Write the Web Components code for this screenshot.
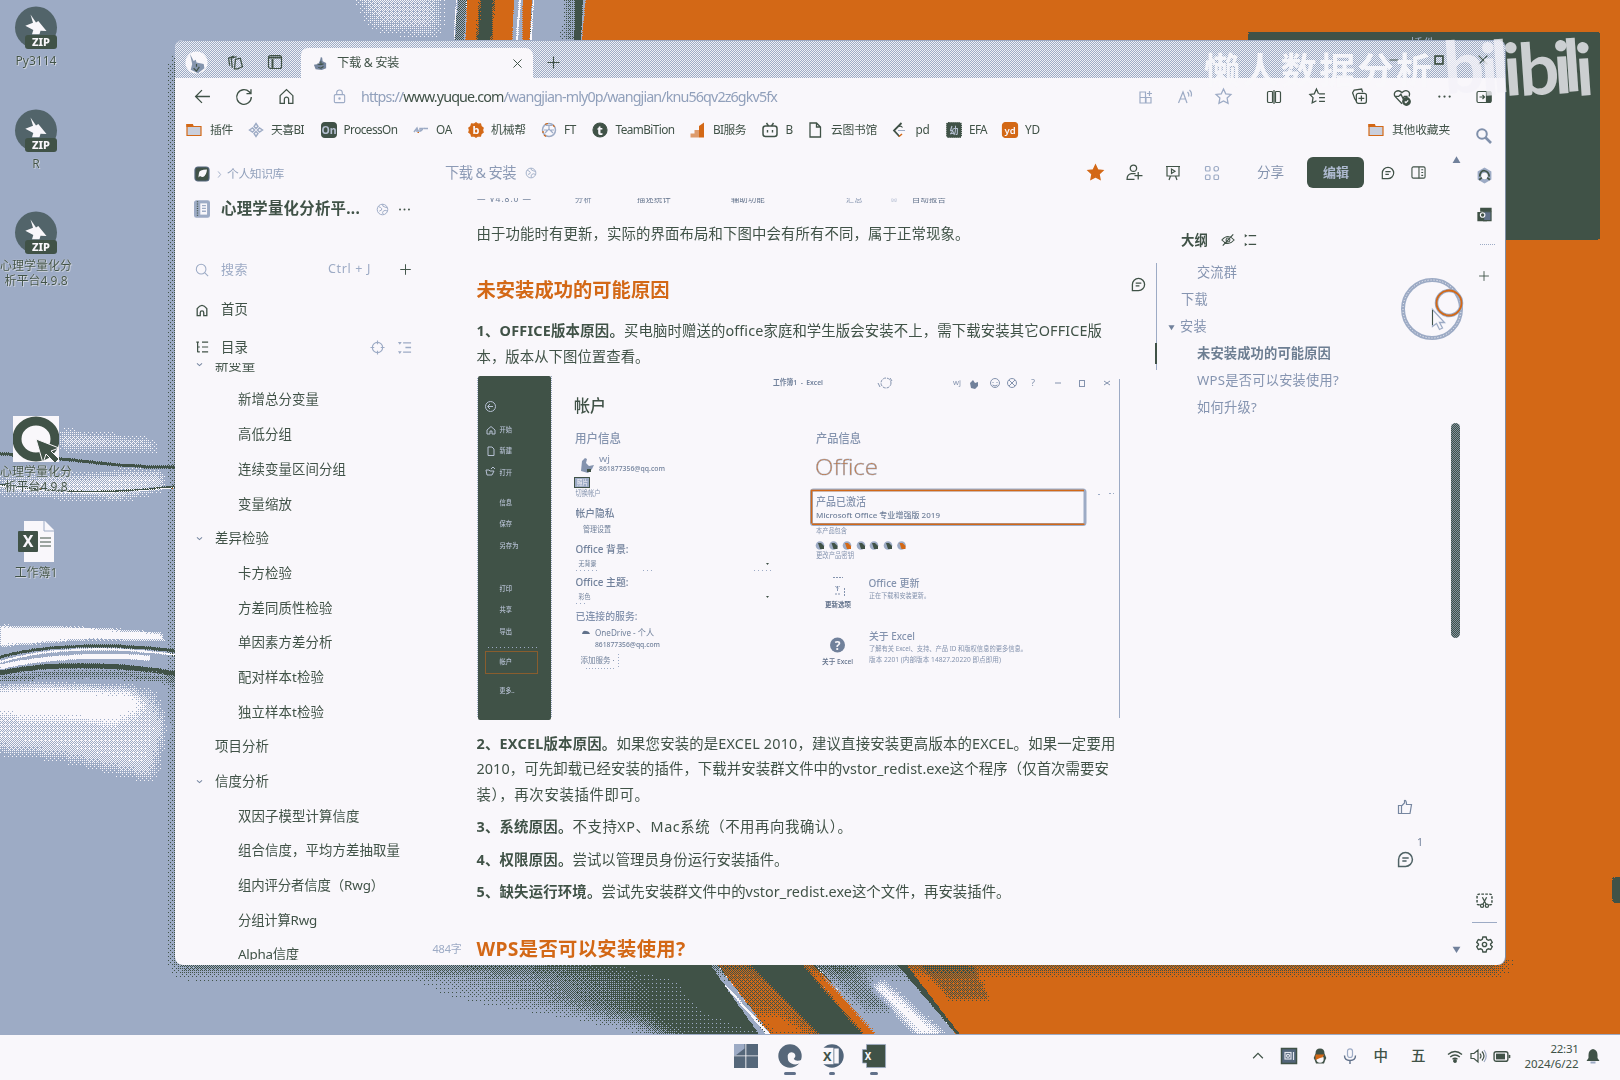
<!DOCTYPE html>
<html lang="zh-CN">
<head>
<meta charset="utf-8">
<title>下载 &amp; 安装</title>
<style>
html,body{margin:0;width:1620px;height:1080px;overflow:hidden;background:#9dabc5}
body{font-family:"Noto Sans","Noto Sans CJK SC",sans-serif;color:#405247;
--ink:#405247;--mist:#9dabc5;--paper:#f9f7fb;--flame:#d36816}
</style>
</head>
<body>
<desk-top></desk-top>
<script>
const INK='#405247',MIST='#9dabc5',PAPER='#f9f7fb',FLAME='#d36816';

const ICONS={
 back:'<path d="M15 8H1.5M7.500 2L1.500 8l6 6"/>',
 reload:'<path d="M14.500 8A6.500 6.500 0 1 1 12.600 3.400L14 4.800M14.200 1v4h-4"/>',
 home:'<path d="M2 7.200L8 1.500l6 5.700V14.500h-4V10.500a2 2 0 0 0-4 0v4H2z"/>',
 lock:'<rect x="2.500" y="6" width="11" height="8.500" rx="1.200"/><path d="M5 6V4a3 3 0 0 1 6 0v2"/><circle cx="8" cy="10.200" r=".7" fill="currentColor"/>',
 spaces:'<path d="M8 5l4.500-1 2 8-4.500 2H7z"/><path d="M5 13l-1-9 5-1.500M2.500 11L1.500 4l5-2"/>',
 tabs:'<rect x="1.500" y="1.500" width="13" height="13" rx="2"/><path d="M1.500 3.500h13M5.500 5v9" stroke-width="2"/>',
 x:'<path d="M3 3l10 10M13 3L3 13"/>',plus:'<path d="M8 1.500v13M1.500 8h13"/>',minus:'<path d="M3 8h10"/>',
 square:'<rect x="3.500" y="3.500" width="9" height="9" stroke-width="2"/>',
 apps:'<path d="M2 3h5.500v11H2zM7.500 8.500H13V14H2M2 8.500h6M8 8.500V14M11.500 2v5M9 4.500h5"/>',
 aloud:'<path d="M1.500 14L6 3l4 11M3.500 10h5M10.500 3q2 2 1 4.500M12.500 1q3 3 1.500 6.500"/>',
 star:'<path d="M8 1l2.100 4.500 4.900.6-3.600 3.400.9 5L8 12.100 3.700 14.500l.9-5L1 6.100l4.900-.6z"/>',
 starf:'<path fill="currentColor" d="M8 1l2.100 4.500 4.900.6-3.600 3.400.9 5L8 12.100 3.700 14.500l.9-5L1 6.100l4.900-.6z"/>',
 split:'<path d="M6.500 2.500H2.800a1.300 1.300 0 0 0-1.300 1.300v8.400a1.300 1.300 0 0 0 1.300 1.300h3.700M9.500 2.500h3.700a1.300 1.300 0 0 1 1.300 1.300v8.400a1.300 1.300 0 0 1-1.300 1.300H9.500M8 1v14M6.500 2.500v11M9.500 2.500v11"/>',
 favs:'<path d="M9 5.500L7 1 5 5.500.8 6.100l3 3L3 14l4-2M9.500 5.500H15M9.500 9H15M9.500 12.500H15"/>',
 collect:'<path d="M5 12L3.500 10 1.500 4.500 3 2l7-1 1 3"/><rect x="5" y="5" width="9.500" height="9.500" rx="2"/><path d="M9.800 7v5.500M7 9.800h5.500"/>',
 heart:'<path d="M8 14L1.800 7.500C-.5 4 4 .5 8 4c4-3.500 8-.5 6.200 3.500M2 7.500h3l2-2 2 4 1-2h3"/><circle cx="12" cy="12" r="3.300" fill="currentColor"/><path stroke="#f9f7fb" d="M10.500 12l1 1 2-2"/>',
 dots:'<g fill="currentColor" stroke="none"><circle cx="2.500" cy="8" r="1.200"/><circle cx="8" cy="8" r="1.200"/><circle cx="13.500" cy="8" r="1.200"/></g>',
 rail:'<rect x="1" y="2.500" width="14" height="11" rx="1.500"/><path fill="currentColor" d="M10.500 2.500h3A1.500 1.500 0 0 1 15 4v8a1.500 1.500 0 0 1-1.500 1.500h-3z"/><path d="M3.500 8h5M6.500 6l2 2-2 2"/>',
 folder:'<path stroke="#d36816" fill="#c9cfdd" d="M1 13V2.500h5l1.500 2H15V13.500H1z"/><path stroke="#d36816" fill="#d36816" d="M1 2.500h5.500v2H1z"/>',
 diam:'<path d="M8 1.500L10 4.500 8 6.500 6 4.500zM8 9.500l2 2-2 3-2-3zM1.500 8l3-2 2 2-2 2zM9.500 8l2-2 3 2-3 2z" stroke-width="1.400"/>',
 badgeOn:'<rect x=".6" y=".6" width="14.800" height="14.800" rx="3.500" fill="#405247" stroke="#405247"/><text x="8" y="12" font-size="10.500" font-weight="700" fill="#b5bfd1" stroke="none" text-anchor="middle">On</text>',
 arp:'<path d="M1 10L4 6l1.500 4M3 9h3M7 10V6.500h3L8 9" stroke-width="1.500"/><path d="M4.500 10.500h1.500" stroke="#d36816"/><path d="M11 6.500h4" stroke-width="1.500"/>',
 gear2:'<path fill="#d36816" stroke="#d36816" d="M8 .8l2 1.400 2.500-.2.700 2.400 2 1.500L14.500 8l.7 2.200-2 1.500-.7 2.300-2.500-.2-2 1.400-2-1.400-2.500.2-.7-2.300-2-1.500L1.500 8 .8 5.900l2-1.500L3.500 2l2.500.2z"/><text x="8" y="12" font-size="11" font-weight="700" fill="#f9f7fb" stroke="none" text-anchor="middle">b</text>',
 wheel:'<circle cx="8" cy="8" r="6.500" stroke-width="1.500"/><path d="M8 3v4l-4 4M8 7l4 4M5 3.500l6 0M3 8h3M10 8h3"/><path stroke="#d36816" d="M4 2.500a6.500 6.500 0 0 1 3-1M12 3l1.500 2M3 13l2 1.500M2 9v2"/>',
 tcirc:'<circle cx="8" cy="8" r="7" fill="#405247"/><text x="8" y="12.500" font-size="13" font-weight="800" fill="#f9f7fb" stroke="none" text-anchor="middle">t</text>',
 bars:'<path fill="#d36816" stroke="none" d="M10 4l5-3.500V15.500h-5z"/><path fill="#dd9b6c" stroke="none" d="M5.500 8H10v7.500H5.500zM1.500 11.500h4v4h-4z"/>',
 tv:'<rect x="1" y="4" width="14" height="10.500" rx="2.500" stroke-width="1.500"/><path d="M4.500 1l2 3M11.500 1l-2 3M5.500 8v2.500M10.500 8v2.500" stroke-width="1.400"/>',
 page:'<path d="M3 1h6.500L13.500 5v10H3zM9.500 1v4h4" stroke-width="1.300"/>',
 leet:'<path d="M10.500 1L3 8.500l5.500 6" stroke-width="1.800"/><path d="M8 4.500q2-1 3.500 1"/><path stroke="#d36816" stroke-width="1.500" d="M8 14.500l3-2.500"/><path stroke="#9dabc5" d="M7 8.500h7"/>',
 efa:'<rect x=".6" y=".6" width="14.800" height="14.800" rx="2" fill="#405247" stroke="#405247" stroke-dasharray="1 1"/><text x="8" y="11.500" font-size="9" font-weight="700" fill="#b5bfd1" stroke="none" text-anchor="middle">幼</text>',
 yd:'<rect x=".5" y=".5" width="15" height="15" rx="3" fill="#d36816" stroke="#d36816"/><text x="8" y="11.500" font-size="9.500" font-weight="600" fill="#f9f7fb" stroke="none" text-anchor="middle">yd</text>',
 search:'<circle cx="7" cy="7" r="5.500"/><path d="M11 11l4 4"/>',
 find:'<circle cx="6" cy="6" r="4.800" stroke-width="2"/><path d="M9.500 9.500L15 15" stroke-width="2.600"/>',
 crumb:'<rect x="1" y="1" width="14" height="14" rx="3" fill="#405247" stroke="#52647a"/><path fill="#f9f7fb" stroke="none" d="M5 7q0-3.500 8-3.500-.5 6-4 7.500-2 0-3-1l-1.500 1.500Q4.500 9 5 7z"/>',
 globe:'<circle cx="8" cy="8" r="6.500"/><path d="M3 4.500q3 .5 4 2.500t-3 3M8 1.500q-.5 3 3 3.500l3 1M14 10q-3-2-5 0t0 4"/>',
 book:'<rect x="1.500" y=".8" width="13" height="14.400" rx="1.500" fill="#9dabc5"/><rect x="6.500" y="3" width="6" height="10" fill="#f9f7fb" stroke="none"/><path stroke="#405247" stroke-dasharray="1 1" d="M4 1v14"/><path d="M8 5h3.500M8 7.500h3.500M8 10h3.500"/>',
 home2:'<path d="M2.500 6.500Q8-1 13.500 6.500V14.500H10V11a2 2 0 0 0-4 0v3.500H2.500z" stroke-width="1.500"/>',
 tree:'<path d="M3 2v12M1.500 2.500h3M3 8h2.500M3 13.500h2.500M8 2.500h7M8 8h7M8 13.500h7" stroke-width="1.400"/>',
 list:'<path d="M6.500 3H15M9 8h6M6.500 13H15" stroke-width="1.400"/><path fill="currentColor" stroke="none" d="M1 2h4L3 5zM1 12h4l-2 3z"/>',
 list2:'<path d="M6.500 3H15M6.500 13H15" stroke-width="1.600"/><path fill="currentColor" stroke="none" d="M2 1l3 2-3 2zM2 11l3 2-3 2z"/>',
 target:'<circle cx="8" cy="8" r="5.500"/><path d="M8 .5v4M8 11.500v4M.5 8h4M11.500 8h4"/>',
 chev:'<path d="M3.500 6L8 10l4.500-4" stroke-width="1.800"/>',up:'<path d="M1.500 11L8 4.500l6.500 6.500" stroke-width="1.600"/>',
 gt:'<path d="M5.500 2.500L10 8l-4.500 5.500" stroke-width="1.600"/>',
 person:'<circle cx="7" cy="4" r="3"/><path d="M9 9H5Q1 9.500 1 14.500h7M11.500 7.500v7M8 11h7.500"/>',
 board:'<path d="M1 1.500h14M2 1.500v9.500h12V1.500M5.500 11L4 15M10.500 11l1.500 4"/><path d="M6.500 4v4.500L10 6.250z"/>',
 quad:'<rect x="1.500" y="1.500" width="4.500" height="4.500" rx="1"/><rect x="10" y="1.500" width="4.500" height="4.500" rx="2"/><rect x="1.500" y="10" width="4.500" height="4.500" rx="1"/><rect x="10" y="10" width="4.500" height="4.500" rx="1"/>',
 chat:'<path d="M1.500 14.500V8A6.500 6.500 0 1 1 8 14.500zM5 6.500h6M5 9.500h4" stroke-width="1.400"/>',
 side:'<rect x="1" y="2" width="14" height="12" rx="1.500"/><path d="M8.500 2v12M11 5h2M11 8h2M11 11h2"/>',
 tri:'<path fill="currentColor" stroke="none" d="M8 2l7 12H1z"/>',trid:'<path fill="currentColor" stroke="none" d="M1 3h14L8 14z"/>',
 hex:'<path fill="#9dabc5" stroke="none" d="M8 .5l6.500 3.700v7.600L8 15.500 1.500 11.800V4.200z"/><circle cx="8" cy="8.500" r="3" fill="#f9f7fb" stroke="none"/><path d="M3.500 9q.5-6 4.500-5.500t4.500 5.500M3 12l2.500-2M13 12l-2.500-2" stroke="#405247" stroke-width="1.600"/>',
 outl:'<path fill="#405247" d="M4 1.500h11v3H4zM1 6h9v8.500H1z"/><path fill="#61718a" d="M7 5h8v9.500H7z"/><circle cx="6" cy="8.500" r="2.400" stroke="#f9f7fb"/>',
 eye:'<path d="M1 8q7-8 14 0-7 8-14 0zM2 14.500L14 1.500" stroke-width="1.300"/><circle cx="8" cy="8" r="2.200"/>',
 thumb:'<path d="M1.500 6.500h3v8h-3zM4.500 7L7.500 4V1.500Q9.500 1 9.500 5.500h5l-1.500 9H4.500"/>',
 snip:'<path d="M3.500 12H2.500Q1 12 1 10.500V4Q1 2 3 2h10q2 0 2 2v6.500q0 1.500-1.500 1.500h-1" stroke-dasharray="2.500 1.200" stroke-width="1.400"/><path d="M6 5l3.500 6.500M10 5l-3.500 6.500"/><circle cx="5.700" cy="13" r="1.500"/><circle cx="10.300" cy="13" r="1.500"/>',
 gear:'<path d="M6.500 1h3l.6 2.200 1.500.8 2.200-.7 1.500 2.600L13.700 7.500v1l1.600 1.600-1.500 2.600-2.200-.7-1.500.8L9.500 15h-3l-.6-2.200-1.500-.8-2.200.7L.7 10.100l1.600-1.600v-1L.7 5.900l1.500-2.600 2.200.7 1.500-.8z" stroke-width="1.300"/><circle cx="8" cy="8" r="2" stroke-width="1.300"/>',
 win:'<path fill="#55677a" stroke="none" d="M0 0h7.600v7.600H0zM8.200 0H16v7.600H8.200zM0 8.200h7.600V16H0zM8.200 8.200H16V16H8.200z"/><path fill="#9dabc5" stroke="none" d="M0 0h7v3L1 7.600H0z"/>',
 edge:'<circle cx="8" cy="8" r="7.800" fill="#56677a" stroke="none"/><path fill="#f9f7fb" stroke="none" d="M6.500 9Q6 6 9 5.500q3 .5 2.500 3l-1 1.500Q12 12 16 10.500l-1 2Q12 14.500 9 13 6.500 12 6.500 9z"/>',
 xl:'<circle cx="8" cy="8" r="7.800" fill="#52657a" stroke="none"/><path fill="#f9f7fb" stroke="none" d="M0 2.500h9v11H0zM9.500 3h3v10h-3z"/><text x="4.800" y="11" font-size="8.500" font-weight="700" fill="#405247" stroke="none" text-anchor="middle">X</text>',
 xl2:'<path fill="#405247" stroke="#9dabc5" stroke-width=".5" d="M3 .3h12.700v15.400H3v-3H.3v-9H3z"/><text x="4" y="10.700" font-size="6.500" font-weight="700" fill="#f9f7fb" stroke="none" text-anchor="middle">X</text>',
 recd:'<rect x=".5" y=".5" width="15" height="15" fill="#53657a" stroke="#405247" stroke-width="1.500"/><rect x="4" y="4.500" width="6" height="6.500" stroke="#e3e5ee"/><circle cx="7" cy="7.800" r="1.500" stroke="#e3e5ee"/><path d="M12.500 4v8" stroke="#e3e5ee"/>',
 qq:'<path fill="#405247" stroke="none" d="M8 .5q4.500 0 4.500 5l1.800 4.500-1 2L12 15.500H4L2.700 12l-1-2L3.500 5.500Q3.500.5 8 .5z"/><circle cx="8" cy="11" r="3.700" fill="#f9f7fb" stroke="none"/><path fill="#d36816" stroke="none" d="M3.500 6.500h9l-2 2.500 1 0-3.500 1-4.500 2z"/>',
 mic:'<rect x="5.500" y=".8" width="5" height="8.700" rx="2.500" stroke="#9dabc5"/><path d="M2.500 7.500q0 5 5.500 5t5.500-5M8 12.500V16" stroke="#61718a" stroke-width="1.400"/>',
 wifi:'<path d="M1 6.500q7-6 14 0M3.200 9q4.800-4 9.600 0M5.500 11.300q2.500-2 5 0" stroke-width="1.400"/><circle cx="8" cy="13" r="1.300" fill="currentColor"/>',
 vol:'<path d="M1 5.500h3L8 2v12L4 10.500H1zM10 5.500q2 2.500 0 5M12 3.500q4 4.500 0 9"/><path stroke="#9dabc5" d="M14 2q4.500 6 0 12"/>',
 bat:'<rect x="1" y="3.500" width="13" height="9" rx="2" stroke-width="1.300"/><rect x="2.800" y="5.300" width="8.500" height="5.400" fill="currentColor" stroke="none"/><path d="M15.500 6.500v3" stroke-width="1.600"/>',
 bell:'<path fill="#405247" stroke="none" d="M8 1Q12.500 2 12.500 7v3l2 3h-13l2-3V7Q3.500 2 8 1z"/><path d="M5.500 14.500h5" stroke="#9dabc5" stroke-width="2"/>',
 avatar:'<circle cx="8" cy="8" r="7.700" fill="#f9f7fb" stroke="none"/><path fill="#8595ae" stroke="none" d="M3.500 2L6 7l1.500-1 .5 2 5 1 .5 3L9 15.500 4 13l1-4z"/><path d="M6 12l2 2 2-3M8 9v2" stroke="#405247" stroke-width=".8"/>',
 fav:'<path fill="#75859e" stroke="none" d="M9 1l1.500 1L11 6l4 2v6l-5 2-7-1-2-5 5-1 2-4z"/><path d="M5 9l3 1 4-1M6 13l3 1 3-2M9 6v3" stroke="#405247"/>'
};
const svg=(n,s)=>`<svg width="${s}" height="${s}" viewBox="0 0 16 16" fill="none" stroke="currentColor" stroke-width="1.200" style="display:block;overflow:visible">${ICONS[n]}</svg>`;

/* Row and column builders: every item follows its neighbour with a margin. */
const T=(x,w,t,s,c=INK,extra='')=>[x,w,`<fit-text w="${w}" style="font-size:${s}px;color:${c};${extra}">${t}</fit-text>`];
const I=(cx,n,s=16,c=INK)=>[cx-s/2,s,`<ui-icon name="${n}" size="${s}" style="color:${c}"></ui-icon>`];
const row=(x0,h,items,mt=0)=>{let x=x0,o='';for(const[l,w,html]of items){o+=`<div style="flex:none;width:${w}px;margin-left:${l-x}px">${html}</div>`;x=l+w}
 return`<div style="display:flex;flex:none;align-items:center;height:${h}px;margin-top:${mt}px">${o}</div>`};
const col=(x0,y0,rows)=>{let y=y0,o='';for(const[cy,h,items]of rows){o+=row(x0,h,items,cy-h/2-y);y=cy+h/2}return o};

const define=(name,css,html,after)=>customElements.define(name,class extends HTMLElement{
 connectedCallback(){if(this.shadowRoot)return;const r=this.attachShadow({mode:'open'});
 r.innerHTML=`<style>:host{display:block}*{box-sizing:border-box}${css}</style>`+(typeof html==='function'?html(this):html);if(after)after(this,r)}});

define('fit-text',':host{display:block;white-space:nowrap;line-height:1.500}span{display:inline-block}','<span><slot></slot></span>',(el,r)=>{
 const w=+el.getAttribute('w'),n=[...el.textContent].length;if(!w)return;
 const nat=r.querySelector('span').getBoundingClientRect().width;
 if(nat)el.style.letterSpacing=((w-nat)/n)+'px'});
define('ui-icon','',el=>svg(el.getAttribute('name'),el.getAttribute('size')));

/* Wallpaper: soft ribbons painted on a canvas and reduced to four inks with an ordered matrix. */
define('desk-wallpaper','canvas{display:block}','<canvas width="1620" height="1080"></canvas>',(el,r)=>{
 const c=r.querySelector('canvas').getContext('2d',{willReadFrequently:true});
 const poly=(f,p,b=0)=>{c.filter=b?`blur(${b}px)`:'none';c.fillStyle=f;c.beginPath();p.forEach((q,i)=>i?c.lineTo(...q):c.moveTo(...q));c.fill();c.filter='none'};
 const curve=(s,w,p,b=0)=>{c.filter=b?`blur(${b}px)`:'none';c.strokeStyle=s;c.lineWidth=w;c.beginPath();c.moveTo(p[0],p[1]);c.bezierCurveTo(...p.slice(2));c.stroke();c.filter='none'};
 c.fillStyle=MIST;c.fillRect(0,0,1620,1080);
 poly('rgba(249,247,251,.46)',[[355,-10],[438,-10],[438,34],[375,26]],7);
 poly(FLAME,[[586,-5],[1620,-5],[1620,1080],[940,1080],[580,60]]);
 poly('#6a7b88',[[458,0],[467,0],[463,50],[454,50]]);poly(PAPER,[[456,0],[457,0],[454,50],[453,50]]);
 poly(FLAME,[[467,0],[514,0],[512,50],[465,50]]);poly(INK,[[480,0],[494,0],[491,50],[476,50]],1);
 poly(FLAME,[[523,0],[532,0],[529,50],[522,50]]);poly(PAPER,[[519,0],[521,0],[517,50],[515,50]]);poly(PAPER,[[533,0],[534,0],[531,50],[529,50]]);
 poly('#7b8b9a',[[567,-20],[577,-20],[574,60],[562,60]],3);
 poly(INK,[[576,-20],[584,-20],[580,60],[573,60]],.7);
 const g=c.createLinearGradient(430,1035,640,960);g.addColorStop(0,MIST);g.addColorStop(.5,'#7f8e9c');g.addColorStop(1,'#46584f');
 c.fillStyle=g;c.beginPath();c.moveTo(175,960);c.lineTo(710,960);c.lineTo(770,1040);c.lineTo(175,1040);c.fill();
 poly(MIST,[[100,990],[460,998],[560,1008],[640,1022],[690,1050],[100,1050]],8);
 poly('rgba(64,82,71,.75)',[[655,955],[706,955],[764,1036],[700,1010]],5);
 poly(MIST,[[707,960],[900,960],[960,1040],[763,1040]]);
 poly(PAPER,[[724,985],[726,985],[771,1035],[767,1035]]);
 poly('#a06a34',[[714,960],[750,960],[822,1035],[771,1035]]);poly(FLAME,[[755,1012],[780,1015],[810,1035],[773,1035]],3);
 poly(INK,[[745,960],[800,960],[868,1036],[820,1036]],1);
 poly(FLAME,[[799,960],[810,960],[876,1035],[864,1035]],1);
 poly('#74849a',[[812,960],[850,960],[895,1010],[868,1012]],4);
 poly(PAPER,[[872,985],[882,982],[944,1036],[919,1036]],3);
 poly(INK,[[893,960],[903,960],[961,1035],[957,1035]],.5);
 poly(FLAME,[[903,960],[1620,960],[1620,1036],[961,1036]]);
 poly('#94602f',[[915,960],[970,960],[990,1000],[950,1000]],1.5);
 poly('rgba(249,247,251,.5)',[[60,432],[150,441],[160,450],[60,448]],4);
 poly('rgba(249,247,251,.6)',[[0,480],[160,472],[168,486],[120,498],[0,492]],5);
 curve(INK,3,[0,454,60,456,110,468,176,467]);curve(PAPER,2,[0,486,60,494,120,493,176,487]);curve(INK,1.3,[0,484,60,495,120,493,176,486]);
 poly(PAPER,[[0,626],[90,628],[160,633],[165,640],[90,639],[0,646]],1);
 curve(PAPER,2,[0,662,50,646,120,647,176,655]);curve(INK,3,[0,657,50,643,120,644,176,651]);
 curve(PAPER,5,[0,667,50,655,110,655,150,658],.6);curve(INK,5,[0,673,50,663,120,663,176,674]);curve('#74848f',6,[0,680,50,672,120,672,176,680],2);
 poly(PAPER,[[-30,690],[40,686],[130,690],[145,708],[120,722],[40,720],[-30,712]],4);
 poly('rgba(249,247,251,.55)',[[-30,695],[150,692],[167,725],[152,778],[60,756],[-30,746]],6);
 c.save();c.shadowColor='rgba(50,66,56,.8)';c.shadowBlur=16;c.shadowOffsetY=7;c.fillStyle=INK;c.fillRect(178,54,1324,907);c.restore();
 c.fillStyle=FLAME;c.fillRect(1505,30,20,930);
 c.fillStyle=INK;c.beginPath();c.roundRect(1248,32,352,208,3);c.fill();
 c.beginPath();c.roundRect(1612,877,20,26,4);c.fill();
 const pal=[[157,171,197],[211,104,22],[64,82,71],[249,247,251]],B=[0,8,2,10,12,4,14,6,3,11,1,9,15,7,13,5];
 const d=c.getImageData(0,0,1620,1036),a=d.data,ratio=(p,u,v)=>{let n=0,m=0;for(let k=0;k<3;k++){const e=v[k]-u[k];n+=(p[k]-u[k])*e;m+=e*e}return Math.max(0,Math.min(1,n/m))};
 for(let y=0,i=0;y<1036;y++)for(let x=0;x<1620;x++,i+=4){const p=[a[i],a[i+1],a[i+2]];let best=1e9,res;
  for(let u=0;u<4;u++)for(let v=u+1;v<4;v++){if(u==1&&v==3)continue;const t=ratio(p,pal[u],pal[v]);let e=0;for(let k=0;k<3;k++)e+=(p[k]-pal[u][k]-t*(pal[v][k]-pal[u][k]))**2;
   if(e<best){best=e;res=t>(B[(y&3)*4+(x&3)]+.9)/16.5?pal[v]:pal[u]}}
  a[i]=res[0];a[i+1]=res[1];a[i+2]=res[2]}
 c.putImageData(d,0,0)});

define('desk-shortcut',':host{position:absolute;width:72px;left:0;text-align:center}svg{display:block;margin:0 auto}.l{font-size:12px;line-height:15px;color:#405247;text-shadow:0 0 1px #f9f7fb,1px 1px 0 #c9cfdd;margin-top:2px;white-space:pre}',el=>{
 const k=el.getAttribute('kind');
 const art={zip:'<svg width="44" height="45" viewBox="0 0 44 45"><circle cx="22" cy="21.500" r="21" fill="#52646a"/><path fill="#f9f7fb" d="M16.500 8.500l5.500 8 2.300-1.500 8.200 10-6-.3-1 3.600h-7.500l1.300-4.300-8-4.300 7.700-3z"/><rect x="11" y="29" width="32" height="14" rx="3" fill="#405247"/><text x="27" y="40" text-anchor="middle" font-size="11" font-weight="800" fill="#f9f7fb">ZIP</text></svg>',
 tool:'<svg width="46" height="46" viewBox="0 0 46 46"><path fill="#f9f7fb" d="M0 0h46v46H0z"/><ellipse cx="23" cy="23" rx="19" ry="18" fill="none" stroke="#405247" stroke-width="9"/><path fill="#405247" stroke="#f9f7fb" d="M23 23l23 9-8 3 8 8-4 4-9-9-3 9z"/></svg>',
 sheet:'<svg width="40" height="42" viewBox="0 0 40 42"><path fill="#f9f7fb" d="M8 0h21l9 9v32H8z"/><path fill="none" stroke="#9dabc5" d="M28 0v10h10"/><rect x="2" y="10" width="20" height="21" rx="1" fill="#405247"/><text x="12" y="26" text-anchor="middle" font-size="16" font-weight="700" fill="#f9f7fb">X</text><path stroke="#405247" d="M24 17h11M24 21h11M24 25h11"/></svg>'}[k];
 return art+'<div class="l"><slot></slot></div>'});

define('tab-strip',`:host{height:38px;background:repeating-conic-gradient(#9dabc5 0 25%,#eff0f6 0 50%) 0 0/2px 2px;border-top:1px solid #9dabc5;border-radius:8px 8px 0 0}
 .b{display:flex;align-items:flex-end;height:37px}.tab{width:232px;height:30px;background:#f9f7fb;border-radius:7px 7px 0 0}`,
 '<div class="b"><div style="width:126px;height:32px">'+row(175,32,[I(196,'avatar',23),I(235,'spaces',17),I(275,'tabs',16)])+'</div><div class="tab">'+row(301,30,[I(320,'fav',14),T(337,62,'下载 &amp; 安装',12.3),I(517.500,'x',13)])+'</div><div style="height:32px">'+row(533,32,[I(553,'plus',15)])+'</div><div style="height:37px">'+row(561,37,[I(1394,'minus',14),I(1439,'square',14),I(1483,'x',14)])+'</div></div>');

define('address-bar','',row(175,37,[I(202,'back',17),I(244,'reload',18),I(286.500,'home',17),I(339,'lock',15,MIST),
 [361,416,`<fit-text w="416" style="font-size:14.300px;color:#91a0bb">https://<span style="color:${INK}">www.yuque.com</span>/wangjian-mly0p/wangjian/knu56qv2z6gkv5fx</fit-text>`],
 I(1146,'apps',16,MIST),I(1185,'aloud',16,MIST),I(1223,'star',17,MIST),I(1273.500,'split'),I(1317,'favs',17),I(1359,'collect',17),I(1402,'heart',18),I(1444,'dots',15),I(1484,'rail')]));

const marks=[[194,'folder',210,23,'插件'],[255.500,'diam',271,33,'天喜BI'],[328.500,'badgeOn',343.500,54,'ProcessOn'],[421,'arp',436,16,'OA'],[476,'gear2',491,35,'机械帮'],[549,'wheel',564,12,'FT'],[600,'tcirc',615.500,59,'TeamBiTion'],[697,'bars',713,33,'BI服务'],[770,'tv',785.500,7,'B'],[815,'page',831,46,'云图书馆'],[899,'leet',915.500,14,'pd'],[953.500,'efa',969,18,'EFA'],[1010,'yd',1025,15,'YD'],[1376,'folder',1392,58,'其他收藏夹']];
define('bookmark-bar','',row(175,30,marks.flatMap(([a,b,c,d,e])=>[I(a,b,16,b==='diam'||b==='arp'||b==='wheel'?MIST:INK),T(c,d,e,11.8)])));

const toc=[['新变量',40,1],['新增总分变量',81],['高低分组',54],['连续变量区间分组',108],['变量缩放',54],['差异检验',54,1],['卡方检验',54],['方差同质性检验',94.500],['单因素方差分析',94.500],['配对样本t检验',86],['独立样本t检验',86],['项目分析',54,2],['信度分析',54,1],['双因子模型计算信度',121.500],['组合信度，平均方差抽取量',162],['组内评分者信度（Rwg）',146],['分组计算Rwg',79],['Alpha信度',61]];
define('book-sidebar',':host{width:255px;height:820px;flex:none}.t{margin-top:5px;height:597px;overflow:hidden}',
 col(175,145,[[174,20,[I(202,'crumb',16),I(219,'gt',9,MIST),T(227,57,'个人知识库',11.8,'#91a0bb')]],
 [209,24,[I(202,'book',18,MIST),T(221,139,'心理学量化分析平...',15.4,INK,'font-weight:700'),I(382,'globe',13,MIST),I(404,'dots',13)]],
 [269.500,24,[I(202,'search',14,MIST),T(221,27,'搜索',13,MIST),T(328,43,'Ctrl + J',12.5,MIST),I(405.500,'plus',13)]],
 [309.500,24,[I(202,'home2',14),T(221,27,'首页',13.4)]],
 [347,22,[I(202,'tree',14),T(221,27,'目录',13.4),I(377,'target',15,MIST),I(404,'list',15,MIST)]]])
 +'<div class="t">'+toc.map(([t,w,k],i)=>row(175,34.7,k?[...(k===1?[I(199.500,'chev',9,'#7686a0')]:[]),T(215,w,t,13.4)]:[T(238,w,t,13.4)],i?0:-15.5)).join('')+'</div>');

const tx=(x,y,w,s,t,f='#8493ae',e='')=>`<text x="${x}" y="${y-.8}" font-size="${s}" textLength="${w}" lengthAdjust="spacingAndGlyphs" fill="${f}" ${e}>${t}</text>`;
define('account-figure','svg{display:block}',`<svg width="644" height="344" viewBox="477 376 644 344" fill="none">
<rect x="478" y="376" width="73" height="344" rx="2" fill="#405247"/><path stroke="#9dabc5" stroke-dasharray="1 1" d="M477.500 378v340M551.500 376v342"/>
<path stroke="#9dabc5" d="M1119.500 379v339"/>
<g stroke="#b6c0d3"><circle cx="490.500" cy="406.500" r="5"/><path d="M488 406.500h5M490 404l-2.500 2.500 2.500 2.500"/><path d="M487 430l4-3.500 4 3.500v4h-3v-3h-2v3h-3zM488 447h4l2 2v6.500h-6zM486 470h3l1 1h4l-2 4h-5zM491 469l2-2 2 2"/></g>
${[['开始',433],['新建',454],['打开',475.500],['信息',505.500],['保存',527],['另存为',548.500],['打印',591.500],['共享',612.500],['导出',634.500],['帐户',664.500],['更多..',694]].map(([t,y])=>tx(499.500,y,t.length>2?(t==='另存为'?19:15):12.5,7,t,'#b6c0d3','font-weight="500"')).join('')}
<rect x="485.500" y="651.500" width="52" height="22" stroke="#d36816" stroke-dasharray="1 1"/><path stroke="#9dabc5" stroke-dasharray="1 3" d="M488 647.500h50"/>
${tx(773,386,50,7.500,'工作簿1  -  Excel','#71819b','font-weight="600" xml:space="preserve"')}
<g stroke="#8493ae"><circle cx="886" cy="383" r="5" stroke-dasharray="3 1"/><path d="M880 387l-2-4M890 378l2 3"/><circle cx="995" cy="383" r="4.500"/><path d="M993 382v1M997 382v1M992.500 385q2.500 2 5 0"/><circle cx="1012" cy="383" r="4.500"/><path d="M1009 380l6 6M1015 380l-6 6M1055 383h6"/><rect x="1079.500" y="380.500" width="5" height="6"/><path d="M1104 381l6 4M1110 381l-6 4"/></g>
<path fill="#71819b" d="M970 383l3-3 2 3 3-1v4l-3 3-4-1z"/>${tx(953,386,8,7,'wj')}${tx(1031,387,4,8,'?')}
${tx(574,412.500,32,17,'帐户',INK,'font-weight="500"')}
${tx(575,443.500,46,12,'用户信息','#8493ae','font-weight="500"')}
<path fill="#8493ae" d="M582 461l3-3 2 1-1 4 3 3 5-1-2 4-4 4-7-2z"/><path fill="#405247" d="M587 469h4v3h-4z"/>
${tx(599,463,11,8.500,'wj')}${tx(599,471.500,66,7.200,'861877356@qq.com','#71819b','font-weight="500"')}
<rect x="574.500" y="477.500" width="15" height="10" stroke="#405247" fill="#9dabc5"/>${tx(577,486,11,7,'照片',PAPER)}
${tx(575.500,496.500,25,7.500,'切换帐户')}
${tx(575.500,517.500,39,10.500,'帐户隐私','#71819b','font-weight="500"')}${tx(583,532.500,28,7.500,'管理设置','#71819b')}
${tx(575.500,554,53,10.500,'Office 背景:','#71819b','font-weight="500"')}${tx(578.500,567,18,7.200,'无背景','#71819b')}
${tx(575.500,587,53,10.500,'Office 主题:','#71819b','font-weight="500"')}${tx(578.500,600,12,7.200,'彩色','#71819b')}
<path stroke="#9dabc5" stroke-dasharray="1 3" d="M576 570.500h22M643 570.500h10M754 570.500h18M576 603.500h10"/><path fill="#405247" d="M766 563h3l-1.500 2zM766 596h3l-1.500 2z"/>
${tx(575.500,620.500,62,10.500,'已连接的服务:','#8493ae','font-weight="500"')}
<path fill="#61718a" d="M582 634q1-4 4-3 3 0 4 3z"/>${tx(595,636.500,59,9,'OneDrive - 个人','#71819b')}${tx(595,647.500,65,7.200,'861877356@qq.com','#71819b','font-weight="500"')}
${tx(580.500,663.500,34,7.500,'添加服务 ·','#71819b')}<path stroke="#9dabc5" stroke-dasharray="1 2" d="M618.500 654v14M586 668.500h30"/>
${tx(816,444,45,12,'产品信息','#8493ae','font-weight="500"')}
${tx(815,475.500,63,22.500,'Office','#d36816','font-family="Open Sans" font-weight="300" stroke="#9dabc5" stroke-width=".5"')}
<rect x="811.500" y="490" width="273.500" height="34.500" rx="2" stroke="#9dabc5" stroke-width="3"/><path stroke="#d36816" stroke-width="1.500" d="M811.500 523.500V490.500H1084M812 524.300h272.500"/>
${tx(816,507,50,11,'产品已激活','#8493ae','font-weight="500"')}${tx(816,518.500,124,7.800,'Microsoft Office 专业增强版 2019','#71819b','font-weight="500"')}
<path stroke="#9dabc5" stroke-dasharray="2 2" d="M1098 494.500h4M1109 493.500h5"/>
${tx(816,533.500,31,7.200,'本产品包含')}
${[820,833.500,847,861,874,888,901.500].map((x,i)=>`<circle cx="${x}" cy="545.500" r="4.300" fill="#9dabc5"/><path fill="${i===2||i===6?'#d36816':'#405247'}" d="M${x-2} ${543}h3l3 3v3h-4z"/>`).join('')}
${tx(816,559,38,7.500,'更改产品密钥')}
<path stroke="#8493ae" stroke-dasharray="2 1" d="M833 577.500h10M835.500 586l2 3 2-3M837.500 586v5M835 594h6M844.500 588v9"/>
${tx(825,607.500,26,7,'更新选项','#61718a','font-weight="600"')}
${tx(868.500,588,51,10.700,'Office 更新','#8493ae','font-weight="500"')}${tx(869,598.500,61,7,'正在下载和安装更新。')}
<circle cx="837.500" cy="645" r="7.500" fill="#71819b"/><text x="837.500" y="649.500" font-size="12" text-anchor="middle" fill="#f9f7fb" font-weight="700">?</text>
${tx(822,665,31,7,'关于 Excel','#61718a','font-weight="500"')}
${tx(869,641,46,10.700,'关于 Excel','#8493ae','font-weight="500"')}${tx(869,651.500,158,7,'了解有关 Excel、支持、产品 ID 和版权信息的更多信息。')}${tx(869,662.500,132,7,'版本 2201 (内部版本 14827.20220 即点即用)')}
</svg>`);

const B='font-weight:700';
define('doc-page',':host{width:700px;height:767px;overflow:hidden;flex:none}.f{margin:7px 0 0 47px}',
 col(430,198,[[199,12,[T(477,55,'— V4.8.0 —',8.500,'#71819b'),T(575,17,'分析',8,'#71819b'),T(637,34,'描述统计',8.200,'#61718a'),T(731,34,'辅助功能',8.200,'#61718a'),T(846,17,'汇总',8,'#8493ae'),I(894,'home',6,MIST),T(912,34,'自动报告',8.200,'#61718a')]],
 [233.500,25,[T(476.500,493,'由于功能时有更新，实际的界面布局和下图中会有所有不同，属于正常现象。',14.4)]],
 [290.500,30,[T(476.500,193,'未安装成功的可能原因',19.3,FLAME,B)]],
 [331,25,[T(476.500,147.500,'1、OFFICE版本原因。',14.4,INK,B),T(624,478,'买电脑时赠送的office家庭和学生版会安装不上，需下载安装其它OFFICE版',14.4)]],
 [356.500,25,[T(476.500,173,'本，版本从下图位置查看。',14.4)]]])
 +'<account-figure class="f"></account-figure>'+
 col(430,720,[[744,25,[T(476.500,140,'2、EXCEL版本原因。',14.4,INK,B),T(616.500,499,'如果您安装的是EXCEL 2010，建议直接安装更高版本的EXCEL。如果一定要用',14.4)]],
 [769,25,[T(476.500,632.500,'2010，可先卸载已经安装的插件，下载并安装群文件中的vstor_redist.exe这个程序（仅首次需要安',14.4)]],
 [794.500,25,[T(476.500,173,'装），再次安装插件即可。',14.4)]],
 [827,25,[T(476.500,96,'3、系统原因。',14.4,INK,B),T(572.500,280,'不支持XP、Mac系统（不用再向我确认）。',14.4)]],
 [859.500,25,[T(476.500,96,'4、权限原因。',14.4,INK,B),T(572.500,216,'尝试以管理员身份运行安装插件。',14.4)]],
 [892,25,[T(476.500,125,'5、缺失运行环境。',14.4,INK,B),T(601.500,409,'尝试先安装群文件中的vstor_redist.exe这个文件，再安装插件。',14.4)]],
 [949,30,[T(432.500,29,'484字',11,MIST),T(476.500,209,'WPS是否可以安装使用?',19.3,FLAME,B)]]]));

define('doc-outline',`:host{display:flex;width:335px;height:767px;flex:none}.rule{flex:none;width:2px;margin:65px 0 0 -5.500px;height:107px;background:linear-gradient(${INK},${INK}) 0 80px/2px 21px no-repeat,linear-gradient(${MIST},${MIST}) 1px 0/1px 107px no-repeat}`,
 '<div style="width:30px;flex:none">'+col(1130,198,[[284,16,[I(1138.500,'chat',15)]]])+'</div><div class="rule"></div><div style="flex:none;width:305px">'+
 col(1156.500,198,[[240,24,[T(1181,27,'大纲',13.4,INK,B),I(1227.500,'eye',14),I(1250,'list2',14)]],
 [273,24,[T(1197,40,'交流群',13.2,'#8594b0')]],[300,24,[T(1181,27,'下载',13.2,'#8594b0')]],[327,24,[I(1171.500,'trid',7,'#71819b'),T(1180,27,'安装',13.2,'#8594b0')]],
 [354,24,[T(1197,134,'未安装成功的可能原因',13.3,'#6d7e92',B)]],[381,24,[T(1197,142,'WPS是否可以安装使用?',13.2,'#8594b0')]],[408,24,[T(1197,60,'如何升级?',13.2,'#8594b0')]],
 [530.500,215,[[1451,9,'<div style="height:215px;border-radius:5px;background:repeating-conic-gradient(#405247 0 25%,#8090a0 0 50%) 0 0/2px 2px"></div>']]],
 [807,18,[I(1405,'thumb',16,'#7686a0')]],[843,14,[T(1417,6,'1',10.5,'#71819b')]],[859,17,[I(1405,'chat',17,'#4f6265')]],[949.500,10,[I(1456,'trid',9,'#71819b')]]])+'</div>');

define('doc-header',':host{height:53px;padding-top:2px}.btn{height:31px;border-radius:6px;background:radial-gradient(#9dabc5 .6px,transparent .7px) 0 0/2px 2px,#405247;display:flex;align-items:center;padding-left:16px}',
 row(430,51,[T(445,71,'下载 &amp; 安装',14.3,'#8c9ab5'),I(530.500,'globe',12,MIST),I(1095.500,'starf',17,FLAME),I(1134,'person',17),I(1172.500,'board',16),I(1211.500,'quad',16,MIST),T(1257,27,'分享',13.6,'#8493ae'),
 [1307,57,'<div class="btn"><fit-text w="26" style="font-size:13px;font-weight:600;color:#aebad0">编辑</fit-text></div>'],I(1388,'chat',14),I(1418,'side',15),[1451.500,9,'<div style="padding-bottom:26px"><ui-icon name="tri" size="9" style="color:#71819b"></ui-icon></div>']]));

define('edge-rail',':host{width:40px;height:850px;flex:none;margin-top:-30px}',
 col(1465,115,[[135.500,16,[I(1484,'find',16,'#8090ab')]],[175,16,[I(1484.500,'hex',17)]],[214,16,[I(1484.500,'outl',15)]],[244,1,[[1480,15,'<div style="border-top:1px dotted #9dabc5"></div>']]],[275.500,14,[I(1484,'plus',12)]],[900,17,[I(1484,'snip',17)]],[922,1,[[1472,25,'<div style="border-top:1px solid #9dabc5"></div>']]],[944,17,[I(1484,'gear',17)]]]));

define('browser-window',':host{position:absolute;left:175px;top:40px;width:1330px;height:925px;background:#f9f7fb;border-radius:8px;overflow:hidden;box-shadow:1px 0 #7f8ea3}.m{display:flex}',
 '<tab-strip></tab-strip><address-bar></address-bar><bookmark-bar></bookmark-bar><div class="m"><book-sidebar></book-sidebar><div style="width:1035px;flex:none"><doc-header></doc-header><div class="m" style="width:1035px"><doc-page></doc-page><doc-outline></doc-outline></div></div><edge-rail></edge-rail></div>');

define('task-bar',':host{position:absolute;left:0;top:1034px;width:1620px;height:46px;background:#f9f7fb;border-top:1px solid #9dabc5}.run{width:12px;height:3px;margin:4px auto 0;border-radius:2px;background:#61718a}.c{font-size:12px}',
 (()=>{const app=(cx,n,r)=>[cx-12,24,`<div style="padding-top:${r?7:0}px"><ui-icon name="${n}" size="24"></ui-icon>${r?`<div class="run" style="width:${r}px"></div>`:''}</div>`];
 return row(0,42,[app(746,'win'),app(789.500,'edge',12),app(832,'xl',6),app(874,'xl2',8),I(1258,'up',12),I(1289,'recd',16),I(1319.500,'qq',16),I(1350,'mic',16),T(1373.500,15,'中',14.5,INK,'font-weight:500'),T(1411,15,'五',14.5,INK,'font-weight:500'),I(1455,'wifi',16),I(1478,'vol',16),I(1501,'bat',17),
 [1524.500,54,'<div style="display:flex;flex-direction:column;align-items:flex-end;line-height:15px"><fit-text w="28" style="font-size:11.500px;line-height:15px">22:31</fit-text><fit-text w="54" style="font-size:11.500px;line-height:15px">2024/6/22</fit-text></div>'],I(1593,'bell',16)])})());

define('pointer-ring',':host{position:absolute;left:1399px;top:275px}','<svg width="66" height="68" viewBox="0 0 66 68" fill="none"><circle cx="33" cy="34" r="29" stroke="#9dabc5" stroke-width="4"/><circle cx="33" cy="34" r="29" stroke="#f9f7fb" stroke-width="1" stroke-dasharray="1 2"/><circle cx="50" cy="28" r="12.500" stroke="#9dabc5" stroke-width="3.500"/><circle cx="50" cy="28" r="12.500" stroke="#d36816" stroke-width="1.800"/><path fill="#f9f7fb" stroke="#9dabc5" stroke-width="1.300" d="M33.500 34.500v17l4-3 3 6 3-1.500-3-5.500h5z"/><path stroke="#405247" d="M33.500 35v15"/></svg>');
define('water-mark',':host{position:absolute;left:1204px;top:26px}svg{display:block}','<svg width="400" height="80" viewBox="1204 26 400 80"><text x="1204" y="84" font-size="36" font-weight="700" textLength="228" fill="#f9f7fb" fill-opacity=".92">懒人数据分析</text><text x="1445 1482 1493 1505 1520 1555 1565 1577" y="94 96 93 96 96 94 92 96" rotate="-4" font-size="72" font-weight="700" font-family="Lato" fill="#f3f2f9" fill-opacity=".78" transform="translate(0 0)">bilibili</text></svg>');

define('desk-top',':host{position:relative;width:1620px;height:1080px;overflow:hidden}.p{position:absolute;left:1410px;top:34px;font-size:13px;line-height:18px;color:#9dabc5}',
 '<desk-wallpaper></desk-wallpaper><desk-shortcut kind="zip" style="top:6px">Py3114</desk-shortcut><desk-shortcut kind="zip" style="top:109px">R</desk-shortcut><desk-shortcut kind="zip" style="top:211px">心理学量化分\n析平台4.9.8</desk-shortcut><desk-shortcut kind="tool" style="top:416px">心理学量化分\n析平台4.9.8</desk-shortcut><desk-shortcut kind="sheet" style="top:521px">工作簿1</desk-shortcut><div class="p">插件</div><browser-window></browser-window><pointer-ring></pointer-ring><water-mark></water-mark><task-bar></task-bar>');
</script>
</body>
</html>
